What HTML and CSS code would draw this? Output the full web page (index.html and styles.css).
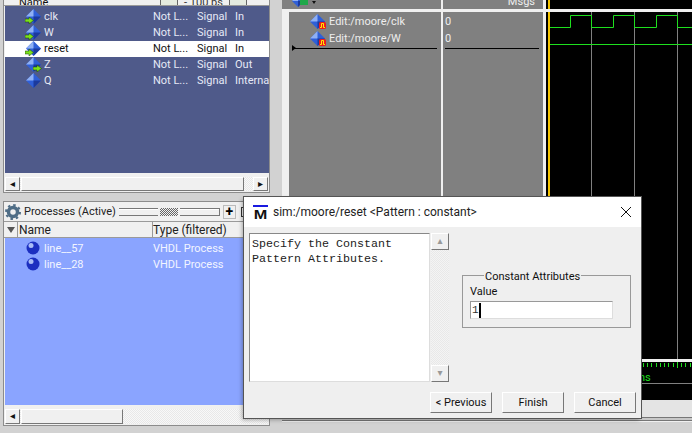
FILE: index.html
```html
<!DOCTYPE html>
<html lang="en">
<head>
  <meta charset="UTF-8">
  <title>sim:/moore/reset</title>
  <link rel="stylesheet" href="styles.css">
</head>
<body>
  <svg class="defs" width="0" height="0">
    <symbol id="diamond" viewBox="0 0 14 14">
      <path d="M7 0L14 7L7 14L0 7Z" fill="#2f5fd8"/>
      <path d="M7 0L7 7L0 7Z" fill="#8fb0f4"/>
      <path d="M7 7L14 7L7 14Z" fill="#1c3a9c"/>
    </symbol>
    <symbol id="arrow" viewBox="0 0 9 7">
      <path d="M0 2H4V0L8.500 3.500L4 7V5H0Z" fill="#7ce01c" stroke="#14400a" stroke-width=".5"/>
    </symbol>
    <symbol id="pulse" viewBox="0 0 7 7">
      <rect width="7" height="7" rx="1.500" fill="#ee1c1c"/>
      <path d="M1 5.500H2.500V1.500H4.500V5.500H6" fill="none" stroke="#ffee00"/>
    </symbol>
    <symbol id="ball" viewBox="0 0 14 14">
      <circle cx="7" cy="7" r="6.500" fill="#1c2fc0"/>
      <circle cx="5" cy="4.500" r="2.500" fill="#a9bcf5"/>
    </symbol>
  </svg>

  <div class="desktop">
    <div class="left">
      <section class="pane objects">
        <div class="col-head">
          <span class="name-col">Name</span>
          <span class="time-box"><span class="tb-end"></span>- 100 ps<span class="tb-end"></span></span>
        </div>
        <ul class="objlist">
          <li><span class="ico"><svg class="dia"><use href="#diamond"/></svg><svg class="arr in"><use href="#arrow"/></svg></span><span class="o-name">clk</span><span class="o-a">Not L...</span><span class="o-b">Signal</span><span class="o-c">In</span></li>
          <li><span class="ico"><svg class="dia"><use href="#diamond"/></svg><svg class="arr in"><use href="#arrow"/></svg></span><span class="o-name">W</span><span class="o-a">Not L...</span><span class="o-b">Signal</span><span class="o-c">In</span></li>
          <li class="sel"><span class="ico"><svg class="dia"><use href="#diamond"/></svg><svg class="arr in"><use href="#arrow"/></svg></span><span class="o-name">reset</span><span class="o-a">Not L...</span><span class="o-b">Signal</span><span class="o-c">In</span></li>
          <li><span class="ico"><svg class="dia"><use href="#diamond"/></svg><svg class="arr out"><use href="#arrow"/></svg></span><span class="o-name">Z</span><span class="o-a">Not L...</span><span class="o-b">Signal</span><span class="o-c">Out</span></li>
          <li><span class="ico"><svg class="dia"><use href="#diamond"/></svg></span><span class="o-name">Q</span><span class="o-a">Not L...</span><span class="o-b">Signal</span><span class="o-c">Interna</span></li>
        </ul>
        <div class="hscroll">
          <span class="sb-btn">&#9666;</span>
          <span class="sb-thumb wide"></span>
          <span class="sb-btn">&#9656;</span>
        </div>
      </section>

      <section class="pane processes">
        <div class="title">
          <svg class="gear" viewBox="0 0 16 16"><circle cx="8" cy="8" r="4.500" fill="none" stroke="#4f6d86" stroke-width="3.500"/><circle cx="8" cy="8" r="7" fill="none" stroke="#4f6d86" stroke-width="2" stroke-dasharray="2.500 3"/></svg>
          <span>Processes (Active)</span>
          <span class="grip"><span class="grip-lines"></span><span class="grip-dots"></span><span class="grip-lines"></span></span>
          <span class="plus">+</span>
          <span class="tool-box"></span>
        </div>
        <div class="col-head proc-head">
          <span class="tri"></span>
          <span class="p-name">Name</span>
          <span class="p-type">Type (filtered)</span>
        </div>
        <ul class="proclist">
          <li><svg class="ball"><use href="#ball"/></svg><span class="p-name">line__57</span><span class="p-type">VHDL Process</span></li>
          <li><svg class="ball"><use href="#ball"/></svg><span class="p-name">line__28</span><span class="p-type">VHDL Process</span></li>
        </ul>
        <div class="hscroll">
          <span class="sb-btn">&#9666;</span>
          <span class="sb-thumb short"></span>
        </div>
      </section>
    </div>

    <section class="pane wave">
      <div class="wave-head">
        <div class="wh-name"><svg class="dia small"><use href="#diamond"/></svg><span class="green-sq"></span><span class="drop"></span></div>
        <div class="wh-val">Msgs</div>
        <div class="wh-plot"><span class="wh-cursor"></span></div>
      </div>
      <div class="wave-body">
        <div class="wcol-name">
          <div class="w-row"><span class="w-ico"><svg class="dia big"><use href="#diamond"/></svg><svg class="pulse"><use href="#pulse"/></svg></span>Edit:/moore/clk</div>
          <div class="w-row"><span class="w-ico"><svg class="dia big"><use href="#diamond"/></svg><svg class="pulse"><use href="#pulse"/></svg></span>Edit:/moore/W</div>
          <div class="w-rule"><span class="rule-mark"></span></div>
        </div>
        <div class="wcol-val">
          <div class="w-row">0</div>
          <div class="w-row">0</div>
          <div class="w-rule"></div>
        </div>
        <div class="wcol-plot">
          <svg class="plot" viewBox="0 0 146 388" width="146" height="388">
            <path d="M45.500 0V347M88.500 0V347M131.500 0V347" stroke="#808080" fill="none"/>
            <path d="M3 15.500H24.500V3.500H45.500V15.500H67.500V3.500H88.500V15.500H110.500V3.500H131.500V15.500H146" stroke="#1ee01e" fill="none"/>
            <path d="M3 32.500H146" stroke="#1ee01e" fill="none"/>
            <path d="M3 0V347" stroke="#f5c400" stroke-width="2" fill="none"/>
            <rect x="0" y="347" width="146" height="3" fill="#f0f0f0"/>
            <path d="M0 371.500H146" stroke="#808080" fill="none"/>
            <path d="M97.500 351V355M101.500 351V355M105.500 351V355M110.500 351V355M114.500 351V355M118.500 351V355M122.500 351V355M127.500 351V355M131.500 350V356M135.500 351V355M139.500 351V355M144.500 351V355" stroke="#1ee01e" fill="none"/>
            <text x="93" y="369" class="ns">ns</text>
          </svg>
        </div>
      </div>
      <div class="wave-foot"></div>
    </section>

    <div class="dialog">
      <div class="dlg-title">
        <span class="logo"><span class="logo-bar"></span><span class="logo-m">M</span></span>
        <span class="dlg-text">sim:/moore/reset &lt;Pattern : constant&gt;</span>
        <svg class="close" viewBox="0 0 12 12"><path d="M1 1L11 11M11 1L1 11" stroke="#111" fill="none"/></svg>
      </div>
      <div class="dlg-body">
        <div class="dlg-main">
          <div class="info">
            <div class="info-text">Specify the Constant
Pattern Attributes.</div>
            <div class="vscroll">
              <span class="sb-btn">&#9652;</span>
              <span class="sb-btn">&#9662;</span>
            </div>
          </div>
          <fieldset class="attrs">
            <legend>Constant Attributes</legend>
            <label>Value</label>
            <div class="value-box">1<span class="caret"></span></div>
          </fieldset>
        </div>
        <div class="dlg-buttons">
          <button>&lt; Previous</button>
          <button>Finish</button>
          <button>Cancel</button>
        </div>
      </div>
    </div>
  </div>
</body>
</html>
```

FILE: styles.css
```css
html, body { margin: 0; padding: 0; }
body { font-family: Roboto, "Noto Sans", sans-serif; font-size: 11px; background: #d2d2d2; width: 692px; height: 433px; overflow: hidden; }
ul { list-style: none; margin: 0; padding: 0; }
.defs { position: absolute; }

.desktop { position: relative; display: flex; width: 692px; height: 433px; }
.left { width: 270px; padding-left: 3px; box-sizing: border-box; display: flex; flex-direction: column; gap: 8px; }
.pane { border: 1px solid #8c8c8c; border-top: 0; background: #f0f0f0; }

.objects { height: 193px; display: flex; flex-direction: column; box-sizing: border-box; }
.col-head { display: flex; align-items: center; background: #f0f0f0; border-bottom: 1px solid #9a9a9a; }
.objects .col-head { height: 5px; overflow: hidden; }
.name-col { margin-left: 15px; line-height: 1px; width: 141px; color: #111; }
.time-box { line-height: 1px; display: flex; align-items: center; color: #333; }
.tb-end { width: 16px; height: 8px; border: 1px solid #666; margin: 0 6px 0 0; background: #e4eadf; }
.time-box .tb-end:last-child { margin: 0 0 0 6px; }
.objlist { flex: 1; background: #4f5a8a; color: #e6e9f6; padding-top: 3px; margin-left: 1px; }
.objlist li { display: flex; align-items: center; height: 16px; }
.objlist li.sel { background: #fff; color: #111; }
.ico { position: relative; width: 16px; height: 16px; margin-left: 20px; }
.dia { position: absolute; left: 1px; top: 0; width: 15px; height: 15px; }
.arr { position: absolute; width: 9px; height: 7px; }
.arr.in { left: 0; top: 8px; }
.arr.out { left: 8px; top: 8px; }
.o-name { width: 109px; margin: 0 0 2px 3px; }
.o-a { width: 44px; margin-bottom: 2px; }
.o-b { width: 38px; margin-bottom: 2px; }
.o-c { white-space: nowrap; overflow: hidden; width: 34px; margin-bottom: 2px; }

.hscroll { display: flex; height: 14px; margin: 4px 1px 1px 1px; background: repeating-conic-gradient(#f8f8f8 0 25%, #e8e8e8 0 50%) 0 0 / 2px 2px; }
.sb-btn { width: 15px; height: 14px; box-sizing: border-box; background: #f0f0f0; border: 1px solid; border-color: #fff #777 #777 #fff; font-size: 10px; line-height: 12px; text-align: center; color: #111; display: block; font-family: "DejaVu Sans", sans-serif; }
.sb-thumb { height: 14px; box-sizing: border-box; background: #f0f0f0; border: 1px solid; border-color: #fff #777 #777 #fff; margin-left: 1px; }
.sb-thumb.wide { flex: 1; margin-right: 9px; }
.sb-thumb.short { width: 102px; }
.processes .hscroll { height: 15px; }
.processes .sb-btn, .processes .sb-thumb { height: 15px; }

.processes { flex: 1; margin-bottom: 7px; border-top: 1px solid #8c8c8c; display: flex; flex-direction: column; }
.title { height: 19px; display: flex; align-items: center; color: #222; }
.gear { width: 16px; height: 16px; margin: 0 3px 0 1px; flex: none; }
.grip { width: 100px; height: 8px; margin-left: 3px; display: flex; gap: 2px; flex: none; border-right: 1px solid #777; }
.grip-lines { flex: 1; border-top: 1px solid #777; border-bottom: 1px solid #777; height: 6px; box-shadow: inset 0 1px #fff; }
.grip-dots { width: 18px; height: 8px; background: repeating-conic-gradient(#666 0 25%, #f0f0f0 0 50%) 0 0 / 2px 2px; }
.plus { font-weight: bold; font-size: 14px; margin-left: 3px; border: 1px solid #bbb; width: 11px; height: 12px; line-height: 11px; text-align: center; color: #000; }
.tool-box { width: 8px; height: 8px; border: 1px solid #333; margin-left: 5px; }
.proc-head { height: 17px; border-top: 1px solid #9a9a9a; box-sizing: border-box; color: #222; font-size: 12px; }
.tri { width: 0; height: 0; margin: 0 2px 0 3px; border: 4px solid transparent; border-top: 6px solid #555; border-bottom: 0; flex: none; }
.proc-head .p-name { width: 133px; height: 16px; line-height: 16px; padding-left: 1px; border-left: 1px solid #999; }
.proc-head .p-type { height: 16px; line-height: 16px; padding-left: 0; border-left: 1px solid #999; }
.proclist { flex: 1; background: #8aa4ff; color: #f2f5ff; padding-top: 2px; margin: 0 0 0 1px; }
.proclist li { display: flex; align-items: center; height: 16px; }
.ball { width: 14px; height: 14px; margin: 0 4px 0 21px; }
.proclist .p-name { width: 109px; }

.wave { flex: 1; margin-left: 12px; border: 0; background: #d2d2d2; display: flex; flex-direction: column; }
.wave-head { display: flex; height: 9px; background: #808080; overflow: hidden; }
.wh-name { width: 159px; position: relative; }
.dia.small { left: 10px; top: -5px; width: 12px; height: 12px; }
.green-sq { position: absolute; left: 18px; top: 0; width: 8px; height: 5px; background: #1fa84a; }
.drop { position: absolute; left: 30px; top: 1px; border: 2px solid transparent; border-top: 3px solid #111; border-bottom: 0; }
.wh-val { width: 102px; text-align: right; color: #eee; padding-right: 8px; box-sizing: border-box; line-height: 3px; border-left: 2px solid #f0f0f0; }
.wh-plot { flex: 1; background: #000; border-left: 3px solid #f0f0f0; }
.wh-cursor { display: block; width: 2px; height: 9px; margin-left: 2px; background: #f5c400; }
.wave-body { display: flex; border-top: 3px solid #f0f0f0; height: 388px; overflow: hidden; background: #f0f0f0; }
.wcol-name { width: 152px; margin-left: 7px; background: #808080; padding-top: 1px; color: #eee; }
.wcol-val { width: 100px; background: #808080; margin-left: 2px; padding-top: 1px; color: #eee; }
.wcol-plot { flex: 1; margin-left: 3px; background: #000; }
.plot { display: block; }
.ns { fill: #1ee01e; font-size: 11px; }
.w-row { height: 17px; display: flex; align-items: center; padding-left: 2px; }
.w-ico { position: relative; width: 20px; height: 17px; margin: 0 0 0 18px; flex: none; }
.dia.big { left: 1px; top: 1px; width: 15px; height: 15px; }
.pulse { position: absolute; left: 10px; top: 9px; width: 7px; height: 7px; }
.w-rule { position: relative; height: 1px; background: #000; margin: 1px 4px 0 2px; }
.wcol-name .w-rule { margin-left: 3px; }
.rule-mark { position: absolute; left: 0; top: -3px; border: 3px solid transparent; border-left: 4px solid #000; border-right: 0; }
.wave-foot { flex: 1; background: linear-gradient(#e4e4e4 0 17px, #777 17px 18px, #c8c8c8 18px 20px, #777 20px 21px, #f0f0f0 21px 22px, #d2d2d2 22px); }

.dialog { position: absolute; left: 244px; top: 197px; width: 397px; height: 221px; background: #efefef; box-shadow: 0 0 0 1px #555, -2px 2px 4px rgba(0,0,0,.3); display: flex; flex-direction: column; }
.dlg-title { height: 30px; background: #fff; display: flex; align-items: center; font-size: 12px; color: #222; }
.logo { width: 16px; margin-left: 8px; display: flex; flex-direction: column; align-items: center; }
.logo-bar { width: 15px; height: 2px; background: #1a1ae0; }
.logo-m { font: bold 13px/11px "Liberation Sans", sans-serif; color: #111; margin-top: 2px; transform: scaleX(1.25); }
.dlg-text { margin-left: 5px; flex: 1; }
.close { width: 12px; height: 12px; margin-right: 9px; }
.dlg-body { flex: 1; display: flex; flex-direction: column; padding: 6px 5px 0 5px; }
.dlg-main { display: flex; height: 149px; }
.info { display: flex; width: 201px; height: 149px; }
.info-text { width: 181px; height: 149px; flex: none; box-sizing: border-box; background: #fff; border: 1px solid; border-color: #888 #ddd #ddd #888; padding: 3px 2px; font: 11.67px/15px "Liberation Mono", monospace; white-space: pre; color: #222; }
.vscroll { width: 18px; margin-left: 1px; display: flex; flex-direction: column; justify-content: space-between; background: repeating-conic-gradient(#f4f4f4 0 25%, #e8e8e8 0 50%) 0 0 / 2px 2px; }
.vscroll .sb-btn { width: 18px; height: 17px; color: #999; line-height: 14px; }
.attrs { margin: 34px 0 0 12px; width: 169px; height: 61px; box-sizing: border-box; border: 1px solid #999; padding: 0 0 0 7px; color: #111; }
.attrs legend { margin-left: 14px; padding: 4px 1px 0; line-height: 12px; }
.attrs label { display: block; line-height: 14px; margin-bottom: 2px; margin-top: 2px; }
.value-box { width: 143px; height: 18px; box-sizing: border-box; background: #fff; border: 1px solid; border-color: #999 #ddd #ddd #999; line-height: 16px; padding-left: 1px; color: #333; font-family: "Liberation Mono", monospace; display: flex; align-items: center; }
.caret { width: 2px; height: 15px; background: #000; }
.dlg-buttons { display: flex; justify-content: flex-end; gap: 10px; margin-top: 10px; }
.dlg-buttons button { width: 62px; height: 21px; padding: 0; box-sizing: border-box; background: #f0f0f0; border: 1px solid; border-color: #fff #777 #777 #fff; font: 11px Roboto, sans-serif; color: #111; }
```
